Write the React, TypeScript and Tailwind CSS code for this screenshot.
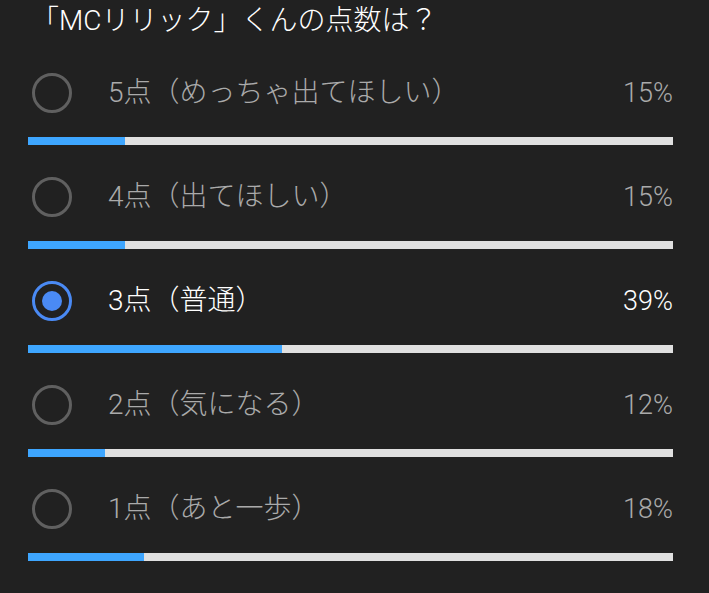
const options = [
  { label: "5点（めっちゃ出てほしい）", pct: 15, bar: 15, selected: false },
  { label: "4点（出てほしい）", pct: 15, bar: 15, selected: false },
  { label: "3点（普通）", pct: 39, bar: 39.4, selected: true },
  { label: "2点（気になる）", pct: 12, bar: 12, selected: false },
  { label: "1点（あと一歩）", pct: 18, bar: 18, selected: false },
];

function Radio({ selected }: { selected: boolean }) {
  if (selected) {
    return (
      <div className="w-10 h-10 rounded-full border-[3.5px] border-[#4a8af4] flex items-center justify-center shrink-0">
        <div className="w-5 h-5 rounded-full bg-[#4a8af4]" />
      </div>
    );
  }
  return <div className="w-10 h-10 rounded-full border-[3.5px] border-[#606060] shrink-0" />;
}

export default function App() {
  return (
    <main
      className="w-[709px] h-[593px] bg-[#212121] overflow-hidden font-light"
      style={{ fontFamily: 'Roboto, "Noto Sans CJK JP", sans-serif' }}
    >
      <div className="h-[73px] pl-[31px] pt-[1px] text-[28px] leading-[40px] text-white">
        「MCリリック」くんの点数は？
      </div>
      <div className="pl-[28px] pr-[36px]">
        {options.map((o) => (
          <div key={o.label} className="h-[104px]">
            <div className="flex items-center h-10 pl-1">
              <Radio selected={o.selected} />
              <span
                className={`ml-[36px] text-[28px] ${o.selected ? "text-white" : "text-[#aaaaaa]"}`}
              >
                {o.label}
              </span>
              <span
                className={`ml-auto text-[27px] ${o.selected ? "text-white" : "text-[#aaaaaa]"}`}
              >
                {o.pct}%
              </span>
            </div>
            <div className="mt-6 h-2 bg-[#e0e0e0]">
              <div className="h-full bg-[#3ea6ff]" style={{ width: `${o.bar}%` }} />
            </div>
          </div>
        ))}
      </div>
    </main>
  );
}
